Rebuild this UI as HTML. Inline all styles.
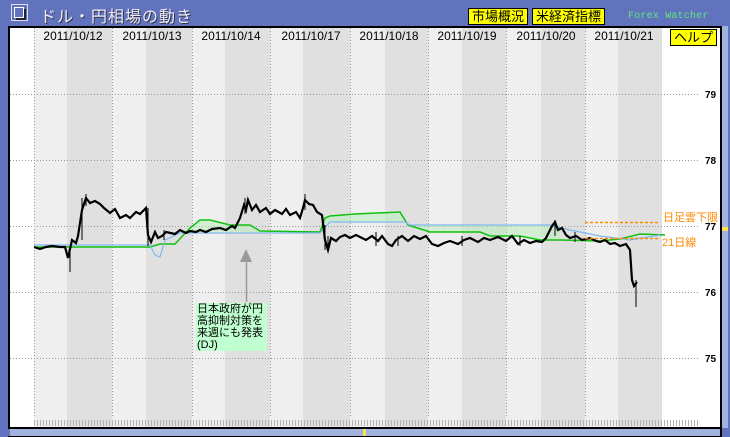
<!DOCTYPE html>
<html><head><meta charset="utf-8"><style>
html,body{margin:0;padding:0;}
body{width:730px;height:437px;position:relative;overflow:hidden;background:#6173bd;font-family:"Liberation Sans","Noto Sans CJK JP",sans-serif;}
.abs{position:absolute;}
.btn{position:absolute;background:#ffff00;border:1px solid #000;font-size:13px;line-height:15px;padding:0 3px;color:#000;}
</style></head><body>
<div class="abs" style="left:11px;top:4px;width:15px;height:15px;border:1px solid #dde;"></div>
<div class="abs" style="left:14px;top:7px;width:8px;height:9px;border:1px solid #fff;box-shadow:2px 2px 0 #223;"></div>
<div class="abs" style="left:40px;top:3px;font-size:16px;color:#eef;text-shadow:1px 1px 0 #334;letter-spacing:1px;">ドル・円相場の動き</div>
<div class="btn" style="left:468px;top:8px;">市場概況</div>
<div class="btn" style="left:532px;top:8px;">米経済指標</div>
<div class="abs" style="left:628px;top:11px;font-family:'Liberation Mono',monospace;font-size:10px;color:#5fe87a;letter-spacing:0.2px;">Forex Watcher</div>
<div class="abs" style="left:8px;top:26px;width:712px;height:401px;background:#000;"></div>
<div class="abs" style="left:10px;top:28px;width:710px;height:399px;background:#fff;"></div>
<div class="abs" style="left:720px;top:26px;width:2px;height:411px;background:#000;"></div>
<div class="abs" style="left:722px;top:26px;width:6px;height:402px;background:#9fb3dd;"></div>
<div class="abs" style="left:722px;top:227px;width:6px;height:4px;background:#ffe050;"></div>
<div class="abs" style="left:8px;top:427px;width:714px;height:2px;background:#000;"></div>
<div class="abs" style="left:10px;top:429px;width:710px;height:7px;background:#9fb3dd;"></div>
<div class="abs" style="left:363px;top:429px;width:3px;height:7px;background:#ffe050;"></div>
<div class="abs" style="left:8px;top:436px;width:714px;height:1px;background:#000;"></div>
<svg class="abs" style="left:0;top:0" width="730" height="437" xmlns="http://www.w3.org/2000/svg">
<g>
<rect x="34" y="28" width="33" height="399" fill="#efefef"/><rect x="67" y="28" width="45" height="399" fill="#e0e0e0"/>
<rect x="112" y="28" width="34" height="399" fill="#efefef"/><rect x="146" y="28" width="46" height="399" fill="#e0e0e0"/>
<rect x="192" y="28" width="33" height="399" fill="#efefef"/><rect x="225" y="28" width="45" height="399" fill="#e0e0e0"/>
<rect x="270" y="28" width="33" height="399" fill="#efefef"/><rect x="303" y="28" width="47" height="399" fill="#e0e0e0"/>
<rect x="350" y="28" width="35" height="399" fill="#efefef"/><rect x="385" y="28" width="43" height="399" fill="#e0e0e0"/>
<rect x="428" y="28" width="34" height="399" fill="#efefef"/><rect x="462" y="28" width="44" height="399" fill="#e0e0e0"/>
<rect x="506" y="28" width="35" height="399" fill="#efefef"/><rect x="541" y="28" width="44" height="399" fill="#e0e0e0"/>
<rect x="585" y="28" width="33" height="399" fill="#efefef"/><rect x="618" y="28" width="44" height="399" fill="#e0e0e0"/>
</g>
<g stroke="#999" stroke-dasharray="1,2" stroke-width="1">
<path d="M34.5 28V418M112.5 28V418M192.5 28V418M270.5 28V418M350.5 28V418M428.5 28V418M506.5 28V418M585.5 28V418"/>
<path d="M10 94.5H700M10 160.5H700M10 226.5H700M10 292.5H700M10 358.5H700"/>
</g>
<path d="M34 423H700" stroke="#b0b0b0" stroke-width="6" stroke-dasharray="1,2"/>
<g font-size="12" fill="#000" font-family="Liberation Sans,sans-serif" text-anchor="middle">
<text x="73" y="40">2011/10/12</text><text x="152" y="40">2011/10/13</text><text x="231" y="40">2011/10/14</text><text x="311" y="40">2011/10/17</text><text x="389" y="40">2011/10/18</text><text x="467" y="40">2011/10/19</text><text x="546" y="40">2011/10/20</text><text x="624" y="40">2011/10/21</text>
</g>
<g font-size="10" fill="#000" font-family="Liberation Sans,sans-serif" font-weight="bold">
<text x="705" y="98">79</text><text x="705" y="164">78</text><text x="705" y="230">77</text><text x="705" y="296">76</text><text x="705" y="362">75</text>
</g>
<polygon points="190,228 200,220 210,220 230,225 250,225 260,231 320,232 325,218 330,216 355,214 400,212 408,225 430,232 480,232 490,236 520,236 540,240 560,240 560,225 410,225 405,222 330,222 320,233 180,233" fill="#b8f0b8" opacity="0.5"/>
<polyline points="34,247 150,247 160,244 175,244 190,228 200,220 210,220 230,225 250,225 260,231 320,232 325,218 330,216 355,214 400,212 408,225 430,232 480,232 490,236 520,236 540,240 560,240 600,241 620,239 640,234 665,235" fill="none" stroke="#10c010" stroke-width="1.5"/>
<polyline points="34,245 150,245 155,255 160,257 165,240 180,233 320,233 330,222 405,222 410,225 550,225 570,230 600,236 630,240 660,235" fill="none" stroke="#80b8f0" stroke-width="1.2"/>
<polyline points="34,247 40,249 46,247 52,246 60,247 65,247 68,258 72,240 76,243 78,236 82,210 84,204 86,198 90,203 95,201 100,204 104,208 110,213 115,209 120,218 126,215 130,218 136,212 140,214 146,208 148,235 151,242 155,232 158,238 162,236 166,232 175,234 180,230 186,233 190,231 196,232 200,230 206,232 212,229 220,228 226,230 232,226 235,228 238,222 240,218 244,205 246,210 248,200 252,210 256,205 260,212 266,208 270,214 275,210 282,214 286,209 290,215 296,212 300,218 303,208 305,200 309,204 313,205 317,212 322,215 325,240 328,250 331,238 336,241 340,237 345,235 350,238 356,235 360,237 366,240 372,236 378,241 382,236 388,244 392,246 396,240 402,236 408,241 414,236 420,239 426,236 432,244 438,246 444,243 450,241 458,244 464,240 470,238 478,242 484,238 490,240 498,237 506,241 512,236 518,244 524,240 530,243 536,241 542,242 546,238 550,230 552,226 555,222 558,230 562,228 566,235 570,238 576,236 582,240 590,238 596,241 600,242 605,240 610,244 615,243 620,246 626,244 630,250 632,280 634,286 637,282" fill="none" stroke="#000" stroke-width="2.2"/>
<path d="M70 250V272M82 198V240M86 194V206M148 208V246M164 230V240M245 198V214M305 194V210M325 225V250M328 236V250M376 232V246M398 236V246M462 236V246M520 236V246M555 220V236M575 232V242M636 280V307" stroke="#000" stroke-width="1"/>
<path d="M585 222.5H660M585 238.5H660" stroke="#ff8a00" stroke-width="1.5" stroke-dasharray="3,2"/>
<g font-size="11" fill="#ff8a00" font-family="Liberation Sans,Noto Sans CJK JP,sans-serif">
<text x="663" y="221">日足雲下限</text><text x="662" y="246">21日線</text>
</g>
<path d="M246.5 260V302" stroke="#999" stroke-width="1.5"/>
<polygon points="246,249 240,262 252,262" fill="#999"/>
</svg>
<div class="abs" style="left:196px;top:303px;width:70px;height:48px;background:#c0ffd0;font-size:11px;line-height:12px;color:#000;padding-left:1px;">日本政府が円<br>高抑制対策を<br>来週にも発表<br>(DJ)</div>
<div class="btn" style="left:670px;top:29px;font-size:13px;">ヘルプ</div>
</body></html>
